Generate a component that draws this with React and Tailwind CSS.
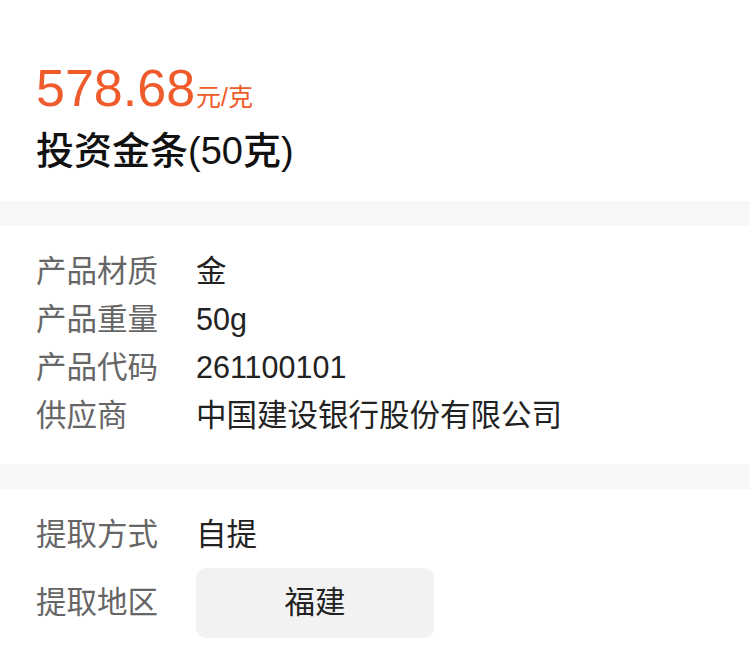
const specs = [
  { label: '产品材质', value: '金' },
  { label: '产品重量', value: '50g' },
  { label: '产品代码', value: '261100101' },
  { label: '供应商', value: '中国建设银行股份有限公司' },
];

function Row({ label, children }) {
  return (
    <div className="flex items-center h-[48px]">
      <div className="w-[160px] shrink-0 text-[30.5px] text-[#666666]">{label}</div>
      <div className="text-[30.5px] text-[#222222]">{children}</div>
    </div>
  );
}

export default function App() {
  return (
    <div className="w-[750px] h-[651px] bg-white overflow-hidden font-['Liberation_Sans','Noto_Sans_CJK_SC',sans-serif]">
      {/* 价格 */}
      <div className="px-9 pt-[62px] pb-[30px]">
        <div className="flex items-baseline leading-none text-[#ef5b2b]">
          <span className="text-[52px]">578.68</span>
          <span className="text-[25px] ml-[1px]">元/克</span>
        </div>
        <h1 className="mt-[17px] text-[38px] leading-[40px] font-medium text-[#111111]">投资金条(50克)</h1>
      </div>

      <div className="h-[25px] bg-[#f7f7f7]" />

      {/* 产品信息 */}
      <div className="px-9 pt-[22px] pb-[24px]">
        {specs.map((s) => (
          <Row key={s.label} label={s.label}>{s.value}</Row>
        ))}
      </div>

      <div className="h-[25px] bg-[#f7f7f7]" />

      {/* 提取 */}
      <div className="px-9 pt-[22px]">
        <Row label="提取方式">自提</Row>
        <div className="flex items-center mt-[9px]">
          <div className="w-[160px] shrink-0 text-[30.5px] text-[#666666]">提取地区</div>
          <button className="w-[238px] h-[70px] rounded-[10px] bg-[#f2f2f2] text-[30.5px] text-[#222222]">福建</button>
        </div>
      </div>
    </div>
  );
}
